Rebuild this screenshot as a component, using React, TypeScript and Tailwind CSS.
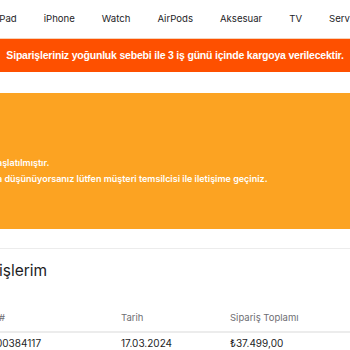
import React from 'react';

const nav = ['iPad', 'iPhone', 'Watch', 'AirPods', 'Aksesuar', 'TV', 'Servis'];

export default function App() {
  return (
    <div className="w-[350px] h-[350px] overflow-hidden bg-white font-['Inter',sans-serif]">
      {/* top nav */}
      <nav className="h-[39px] border-b border-[#f6d3b8] flex items-center">
        <ul className="flex items-center gap-[27px] -ml-[3px] whitespace-nowrap text-[9.6px] text-[#1d1d1f]">
          {nav.map((n) => (
            <li key={n}>{n}</li>
          ))}
        </ul>
      </nav>

      {/* notice */}
      <div className="h-[33px] bg-[#fe5000] flex items-center justify-center font-['Liberation_Sans',sans-serif] font-bold text-[10.5px] text-white tracking-[-0.2px] whitespace-nowrap">
        Siparişleriniz yoğunluk sebebi ile 3 iş günü içinde kargoya verilecektir.
      </div>

      <div className="h-[21px]" />

      {/* status box */}
      <div className="h-[136px] bg-[#fca322] flex flex-col justify-end pb-[42px] text-[9px] text-white font-semibold whitespace-nowrap leading-[16px]">
        <p className="-ml-[3px]">aşlatılmıştır.</p>
        <p className="-ml-[3px]">a düşünüyorsanız lütfen müşteri temsilcisi ile iletişime geçiniz.</p>
      </div>

      <div className="h-[20px] border-b border-[#ececec]" />

      {/* orders */}
      <h2 className="mt-[10px] -ml-[1px] text-[15.5px] leading-[24px] text-[#1d1d1f] whitespace-nowrap">işlerim</h2>

      <div className="mt-[28px] text-[9.5px] text-[#6e6e73] grid grid-cols-[121px_109px_1fr] pb-[6px] border-b-2 border-[#ececec]">
        <span className="-ml-[1px]">#</span>
        <span>Tarih</span>
        <span>Sipariş Toplamı</span>
      </div>
      <div className="mt-[3px] text-[10px] text-[#1d1d1f] grid grid-cols-[121px_109px_1fr]">
        <span className="-ml-[4px]">00384117</span>
        <span>17.03.2024</span>
        <span>₺37.499,00</span>
      </div>
    </div>
  );
}
